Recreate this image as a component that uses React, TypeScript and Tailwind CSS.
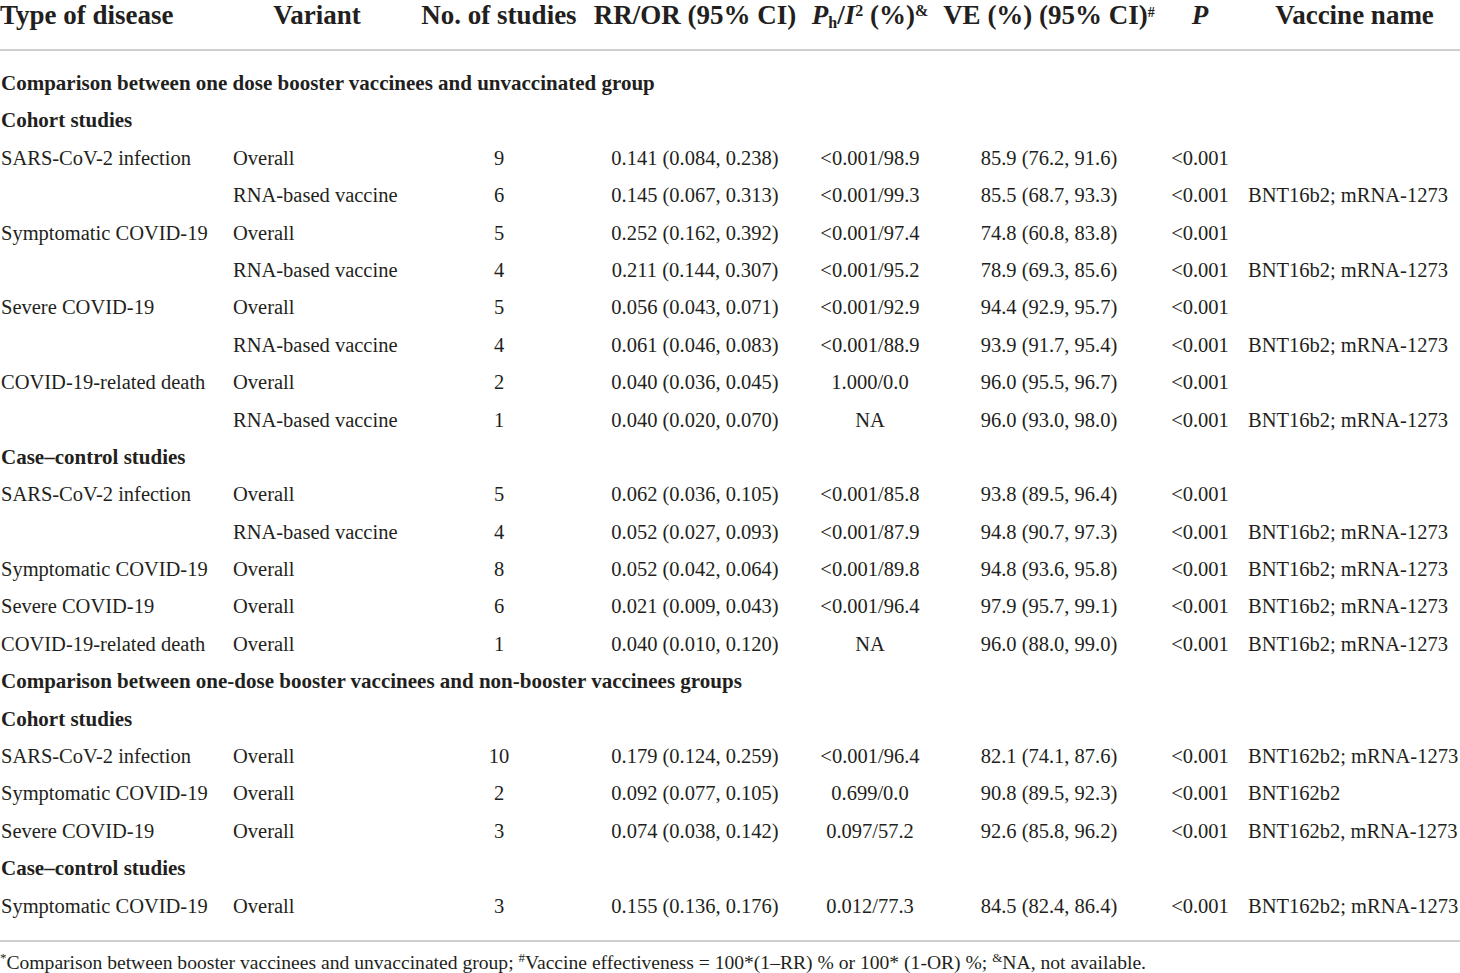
import React from "react";

type Row =
  | { kind: "section"; text: string }
  | { kind: "data"; d: string; v: string; n: string; rr: string; ph: string; ve: string; p: string; vac: string };

const rows: Row[] = [
  { kind: "section", text: "Comparison between one dose booster vaccinees and unvaccinated group" },
  { kind: "section", text: "Cohort studies" },
  { kind: "data", d: "SARS-CoV-2 infection", v: "Overall", n: "9", rr: "0.141 (0.084, 0.238)", ph: "<0.001/98.9", ve: "85.9 (76.2, 91.6)", p: "<0.001", vac: "" },
  { kind: "data", d: "", v: "RNA-based vaccine", n: "6", rr: "0.145 (0.067, 0.313)", ph: "<0.001/99.3", ve: "85.5 (68.7, 93.3)", p: "<0.001", vac: "BNT16b2; mRNA-1273" },
  { kind: "data", d: "Symptomatic COVID-19", v: "Overall", n: "5", rr: "0.252 (0.162, 0.392)", ph: "<0.001/97.4", ve: "74.8 (60.8, 83.8)", p: "<0.001", vac: "" },
  { kind: "data", d: "", v: "RNA-based vaccine", n: "4", rr: "0.211 (0.144, 0.307)", ph: "<0.001/95.2", ve: "78.9 (69.3, 85.6)", p: "<0.001", vac: "BNT16b2; mRNA-1273" },
  { kind: "data", d: "Severe COVID-19", v: "Overall", n: "5", rr: "0.056 (0.043, 0.071)", ph: "<0.001/92.9", ve: "94.4 (92.9, 95.7)", p: "<0.001", vac: "" },
  { kind: "data", d: "", v: "RNA-based vaccine", n: "4", rr: "0.061 (0.046, 0.083)", ph: "<0.001/88.9", ve: "93.9 (91.7, 95.4)", p: "<0.001", vac: "BNT16b2; mRNA-1273" },
  { kind: "data", d: "COVID-19-related death", v: "Overall", n: "2", rr: "0.040 (0.036, 0.045)", ph: "1.000/0.0", ve: "96.0 (95.5, 96.7)", p: "<0.001", vac: "" },
  { kind: "data", d: "", v: "RNA-based vaccine", n: "1", rr: "0.040 (0.020, 0.070)", ph: "NA", ve: "96.0 (93.0, 98.0)", p: "<0.001", vac: "BNT16b2; mRNA-1273" },
  { kind: "section", text: "Case–control studies" },
  { kind: "data", d: "SARS-CoV-2 infection", v: "Overall", n: "5", rr: "0.062 (0.036, 0.105)", ph: "<0.001/85.8", ve: "93.8 (89.5, 96.4)", p: "<0.001", vac: "" },
  { kind: "data", d: "", v: "RNA-based vaccine", n: "4", rr: "0.052 (0.027, 0.093)", ph: "<0.001/87.9", ve: "94.8 (90.7, 97.3)", p: "<0.001", vac: "BNT16b2; mRNA-1273" },
  { kind: "data", d: "Symptomatic COVID-19", v: "Overall", n: "8", rr: "0.052 (0.042, 0.064)", ph: "<0.001/89.8", ve: "94.8 (93.6, 95.8)", p: "<0.001", vac: "BNT16b2; mRNA-1273" },
  { kind: "data", d: "Severe COVID-19", v: "Overall", n: "6", rr: "0.021 (0.009, 0.043)", ph: "<0.001/96.4", ve: "97.9 (95.7, 99.1)", p: "<0.001", vac: "BNT16b2; mRNA-1273" },
  { kind: "data", d: "COVID-19-related death", v: "Overall", n: "1", rr: "0.040 (0.010, 0.120)", ph: "NA", ve: "96.0 (88.0, 99.0)", p: "<0.001", vac: "BNT16b2; mRNA-1273" },
  { kind: "section", text: "Comparison between one-dose booster vaccinees and non-booster vaccinees groups" },
  { kind: "section", text: "Cohort studies" },
  { kind: "data", d: "SARS-CoV-2 infection", v: "Overall", n: "10", rr: "0.179 (0.124, 0.259)", ph: "<0.001/96.4", ve: "82.1 (74.1, 87.6)", p: "<0.001", vac: "BNT162b2; mRNA-1273" },
  { kind: "data", d: "Symptomatic COVID-19", v: "Overall", n: "2", rr: "0.092 (0.077, 0.105)", ph: "0.699/0.0", ve: "90.8 (89.5, 92.3)", p: "<0.001", vac: "BNT162b2" },
  { kind: "data", d: "Severe COVID-19", v: "Overall", n: "3", rr: "0.074 (0.038, 0.142)", ph: "0.097/57.2", ve: "92.6 (85.8, 96.2)", p: "<0.001", vac: "BNT162b2, mRNA-1273" },
  { kind: "section", text: "Case–control studies" },
  { kind: "data", d: "Symptomatic COVID-19", v: "Overall", n: "3", rr: "0.155 (0.136, 0.176)", ph: "0.012/77.3", ve: "84.5 (82.4, 86.4)", p: "<0.001", vac: "BNT162b2; mRNA-1273" },
];

const grid = "grid grid-cols-[233px_180px_172px_220px_130px_228px_74px_1fr]";

export default function App() {
  return (
    <div
      className="w-[1460px] h-[973px] bg-white text-[#231f20] overflow-hidden"
      style={{ fontFamily: '"Liberation Serif", "Times New Roman", serif' }}
    >
      <div className={`${grid} h-[51px] items-start text-[27px] font-bold leading-[30px] border-b-2 border-[#cfcfcf]`}>
        <div className="whitespace-nowrap">Type of disease</div>
        <div className="text-center pr-[12px] whitespace-nowrap">Variant</div>
        <div className="text-center whitespace-nowrap">No. of studies</div>
        <div className="text-center whitespace-nowrap">RR/OR (95% CI)</div>
        <div className="text-center whitespace-nowrap">
          <i>P</i>
          <sub className="text-[16px]">h</sub>/<i>I</i>
          <sup className="text-[16px]">2</sup> (%)<sup className="text-[16px]">&amp;</sup>
        </div>
        <div className="text-center whitespace-nowrap">
          VE (%) (95% CI)<sup className="text-[14px]">#</sup>
        </div>
        <div className="text-center">
          <i>P</i>
        </div>
        <div className="text-center pl-[12px] whitespace-nowrap">Vaccine name</div>
      </div>
      <div className="pt-[14px] text-[20.5px] leading-[37.4px]">
        {rows.map((r, i) =>
          r.kind === "section" ? (
            <div key={i} className="h-[37.4px] font-bold text-[21px] whitespace-nowrap pl-[1px]">
              {r.text}
            </div>
          ) : (
            <div key={i} className={`${grid} h-[37.4px] whitespace-nowrap`}>
              <div className="pl-[1px]">{r.d}</div>
              <div>{r.v}</div>
              <div className="text-center">{r.n}</div>
              <div className="text-center">{r.rr}</div>
              <div className="text-center">{r.ph}</div>
              <div className="text-center">{r.ve}</div>
              <div className="text-center">{r.p}</div>
              <div className="pl-[11px]">{r.vac}</div>
            </div>
          )
        )}
      </div>
      <div className="mt-[15px] border-t-2 border-[#cfcfcf] pt-[7px] text-[19.6px] leading-[28px] whitespace-nowrap">
        <sup className="text-[13px]">*</sup>Comparison between booster vaccinees and unvaccinated group;{" "}
        <sup className="text-[13px]">#</sup>Vaccine effectiveness = 100*(1–RR) % or 100* (1-OR) %;{" "}
        <sup className="text-[13px]">&amp;</sup>NA, not available.
      </div>
    </div>
  );
}
